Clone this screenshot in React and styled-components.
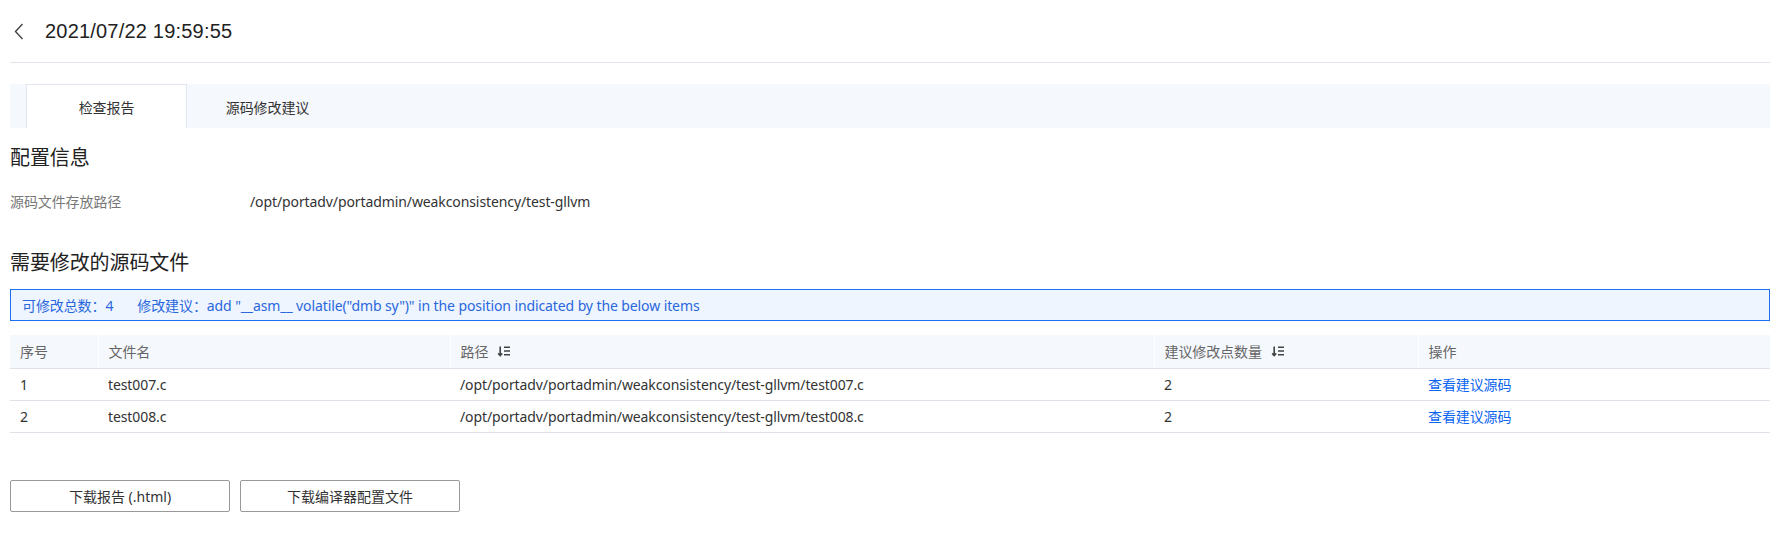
import React from "react";
import styled, { createGlobalStyle } from "styled-components";

const Global = createGlobalStyle`
  html, body { margin: 0; padding: 0; background: #fff; }
  body {
    font-family: "Noto Sans", "Noto Sans CJK SC", sans-serif;
    font-size: 14px;
    letter-spacing: -0.1px;
    color: #333;
  }
  * { box-sizing: border-box; }
`;

const Page = styled.div`
  padding: 0 11px 0 10px;
`;

const Header = styled.header`
  height: 63px;
  display: flex;
  align-items: center;
  border-bottom: 1px solid #e1e3ed;
`;

const BackButton = styled.button`
  border: none;
  background: none;
  padding: 0;
  margin: 0 21px 0 4px;
  display: flex;
  align-items: center;
  cursor: pointer;
  color: #444;
`;

const Title = styled.h1`
  margin: 0;
  font-family: "Liberation Sans", "Noto Sans CJK SC", sans-serif;
  font-size: 20px;
  letter-spacing: 0.2px;
  font-weight: 400;
  color: #222;
  line-height: 28px;
`;

const TabBar = styled.div`
  margin-top: 21px;
  height: 44px;
  background: #f5f8fd;
  display: flex;
  padding-left: 16px;
`;

const Tab = styled.div`
  width: 161px;
  height: 44px;
  display: flex;
  align-items: center;
  justify-content: center;
  font-size: 14px;
  color: #333;
  background: ${(p) => (p.$active ? "#fff" : "transparent")};
  border: 1px solid ${(p) => (p.$active ? "#e1e6f0" : "transparent")};
  border-bottom: none;
  cursor: pointer;
`;

const SectionTitle = styled.h2`
  margin: ${(p) => p.$mt}px 0 0;
  font-size: 20px;
  font-weight: 400;
  line-height: 28px;
  color: #222;
`;

const InfoRow = styled.div`
  margin-top: 20px;
  display: flex;
  line-height: 20px;
`;

const InfoLabel = styled.span`
  width: 240px;
  color: #777;
`;

const InfoValue = styled.span`
  color: #333;
`;

const Notice = styled.div`
  margin-top: 12px;
  height: 32px;
  border: 1px solid #1b6ff0;
  background: #eef5ff;
  color: #2a67dc;
  display: flex;
  align-items: center;
  padding-left: 11px;
`;

const NoticeItem = styled.span`
  margin-right: 24px;
`;

const Table = styled.table`
  margin-top: 14px;
  width: 100%;
  border-collapse: collapse;
  table-layout: fixed;
`;

const Th = styled.th`
  height: 33px;
  background: #f5f8fd;
  color: #666;
  font-weight: 400;
  text-align: left;
  padding: 0 0 0 10px;
  border-bottom: 1px solid #dfe1e8;
  border-left: 1px solid #fff;
  &:first-child { border-left: none; }
`;

const Td = styled.td`
  height: 32px;
  padding: 0 0 0 10px;
  border-bottom: 1px solid #dfe1e8;
  color: #333;
`;

const HeadInner = styled.span`
  display: inline-flex;
  align-items: center;
  gap: 9px;
`;

const Link = styled.a`
  color: #0a64f0;
  text-decoration: none;
  cursor: pointer;
`;

const Actions = styled.div`
  margin-top: 47px;
  display: flex;
  gap: 10px;
`;

const Button = styled.button`
  width: 220px;
  height: 32px;
  border: 1px solid #999;
  border-radius: 2px;
  background: #fff;
  font-family: inherit;
  font-size: 14px;
  color: #333;
  cursor: pointer;
`;

const SortIcon = () => (
  <svg width="14" height="14" viewBox="0 0 14 14" fill="none" stroke="#444" strokeWidth="1.6">
    <path d="M3.2 2.5v9M1.2 9.4L3.2 11.6l2-2.2" />
    <path d="M7 3.2h6M7 7h6M7 10.8h6" />
  </svg>
);

const rows = [
  { id: 1, name: "test007.c", path: "/opt/portadv/portadmin/weakconsistency/test-gllvm/test007.c", count: 2 },
  { id: 2, name: "test008.c", path: "/opt/portadv/portadmin/weakconsistency/test-gllvm/test008.c", count: 2 },
];

export default function App() {
  return (
    <Page>
      <Global />
      <Header>
        <BackButton aria-label="back">
          <svg width="10" height="17" viewBox="0 0 10 17" fill="none" stroke="#444" strokeWidth="1.4">
            <path d="M8.5 1L1.5 8.5L8.5 16" />
          </svg>
        </BackButton>
        <Title>2021/07/22 19:59:55</Title>
      </Header>

      <TabBar>
        <Tab $active>检查报告</Tab>
        <Tab>源码修改建议</Tab>
      </TabBar>

      <SectionTitle $mt={16}>配置信息</SectionTitle>
      <InfoRow>
        <InfoLabel>源码文件存放路径</InfoLabel>
        <InfoValue>/opt/portadv/portadmin/weakconsistency/test-gllvm</InfoValue>
      </InfoRow>

      <SectionTitle $mt={37}>需要修改的源码文件</SectionTitle>
      <Notice>
        <NoticeItem>可修改总数：4</NoticeItem>
        <span>修改建议：add "__asm__ volatile("dmb sy")" in the position indicated by the below items</span>
      </Notice>

      <Table>
        <colgroup>
          <col style={{ width: "5%" }} />
          <col style={{ width: "20%" }} />
          <col style={{ width: "40%" }} />
          <col style={{ width: "15%" }} />
          <col style={{ width: "20%" }} />
        </colgroup>
        <thead>
          <tr>
            <Th>序号</Th>
            <Th>文件名</Th>
            <Th>
              <HeadInner>路径 <SortIcon /></HeadInner>
            </Th>
            <Th>
              <HeadInner>建议修改点数量 <SortIcon /></HeadInner>
            </Th>
            <Th>操作</Th>
          </tr>
        </thead>
        <tbody>
          {rows.map((r) => (
            <tr key={r.id}>
              <Td>{r.id}</Td>
              <Td>{r.name}</Td>
              <Td>{r.path}</Td>
              <Td>{r.count}</Td>
              <Td>
                <Link>查看建议源码</Link>
              </Td>
            </tr>
          ))}
        </tbody>
      </Table>

      <Actions>
        <Button>下载报告 (.html)</Button>
        <Button>下载编译器配置文件</Button>
      </Actions>
    </Page>
  );
}
